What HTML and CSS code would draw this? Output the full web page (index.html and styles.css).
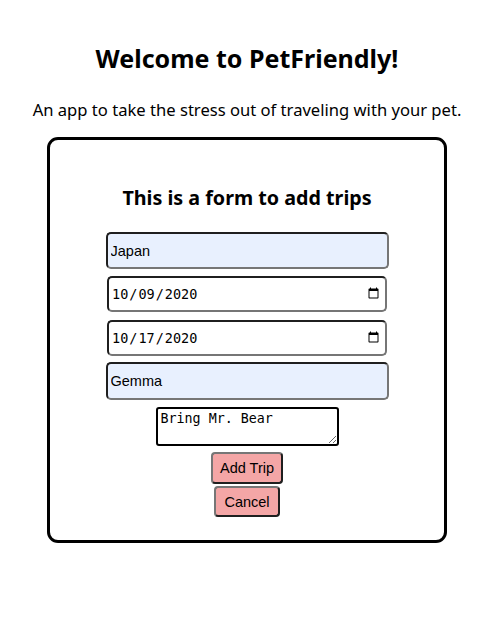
FILE: index.html
```html
<!DOCTYPE html>
<html lang="en">
<head>
<meta charset="utf-8">
<title>PetFriendly</title>
<link rel="stylesheet" href="styles.css">
</head>
<body>
<main class="page">
  <h1 class="title">Welcome to PetFriendly!</h1>
  <p class="tagline">An app to take the stress out of traveling with your pet.</p>
  <section class="card">
    <h2 class="card-title">This is a form to add trips</h2>
    <form class="trip-form">
      <input class="field field-auto field-place" type="text" value="Japan">
      <input class="field field-date field-start" type="date" value="2020-10-09">
      <input class="field field-date field-end" type="date" value="2020-10-17">
      <input class="field field-auto field-pet" type="text" value="Gemma">
      <textarea class="notes">Bring Mr. Bear</textarea>
      <button class="btn btn-add" type="button">Add Trip</button>
      <button class="btn btn-cancel" type="button">Cancel</button>
    </form>
  </section>
</main>
</body>
</html>
```

FILE: styles.css
```css
html, body {
  margin: 0;
  padding: 0;
  background: #ffffff;
}

.page {
  width: 494px;
  display: flex;
  flex-direction: column;
  align-items: center;
  font-family: "Noto Sans", "Open Sans", sans-serif;
  color: #000;
}

.title {
  margin: 42px 0 0;
  font-size: 25px;
  line-height: 32px;
  font-weight: 700;
}

.tagline {
  margin: 24px 0 0;
  font-size: 16.6px;
  line-height: 24px;
}

.card {
  box-sizing: border-box;
  width: 400px;
  height: 406px;
  margin-top: 15px;
  border: 3px solid #000;
  border-radius: 11px;
  padding-top: 44px;
  display: flex;
  flex-direction: column;
  align-items: center;
}

.card-title {
  margin: 0;
  font-size: 19.7px;
  line-height: 28px;
  font-weight: 700;
}

.trip-form {
  margin-top: 20px;
  display: flex;
  flex-direction: column;
  align-items: center;
}

.field {
  box-sizing: border-box;
  margin: 0;
  border-style: solid;
  border-width: 2px;
  border-color: #1f1f1f #767676 #767676 #1f1f1f;
  border-radius: 5px;
  outline: none;
}

.field-auto {
  width: 283px;
  height: 37px;
  padding: 0 3px;
  background: #e8f0fe;
  font-family: "Liberation Sans", Arial, sans-serif;
  font-size: 14.5px;
  color: #000;
}

.field-pet {
  height: 38px;
  margin-top: 6px;
}

.field-date {
  width: 280px;
  height: 36px;
  padding: 0 3px 0 2px;
  background: #fff;
  font-family: "DejaVu Sans Mono", "Liberation Mono", monospace;
  font-size: 13.5px;
  color: #000;
}

.field-start {
  margin-top: 7px;
}

.field-end {
  margin-top: 8px;
}

.notes {
  box-sizing: border-box;
  width: 183px;
  height: 39px;
  margin: 7px 0 0;
  padding: 2px 3px;
  border: 2px solid #000;
  border-radius: 3px;
  font-family: "DejaVu Sans Mono", "Liberation Mono", monospace;
  font-size: 13.33px;
  line-height: 16px;
  color: #000;
  resize: both;
  outline: none;
}

.btn {
  box-sizing: border-box;
  height: 32px;
  margin: 6px 0 0;
  border-style: solid;
  border-width: 2px;
  border-color: #767676 #1f1f1f #1f1f1f #767676;
  border-radius: 4px;
  background: #f4a6a6;
  font-family: "Liberation Sans", Arial, sans-serif;
  font-size: 14.5px;
  color: #000;
  padding: 0 7px;
}

.btn-cancel {
  height: 31px;
  margin-top: 2px;
  padding: 0 8px;
}
```
